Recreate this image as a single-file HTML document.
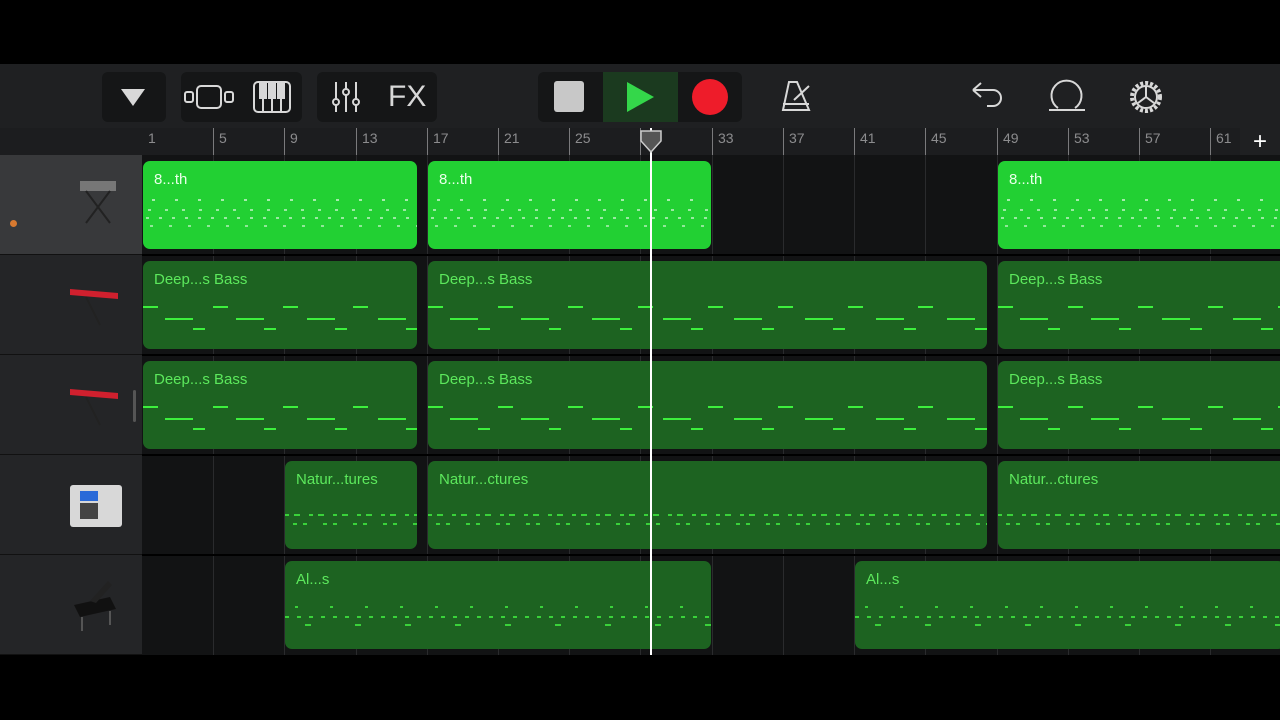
<!DOCTYPE html>
<html><head><meta charset="utf-8"><style>
*{margin:0;padding:0;box-sizing:border-box}
body{width:1280px;height:720px;background:#000;position:relative;overflow:hidden;font-family:"Liberation Sans",sans-serif}
.a{position:absolute}
#tb{left:0;top:64px;width:1280px;height:64px;background:#1f2022}
.btn{position:absolute;top:8px;height:50px;background:#151617;border-radius:6px}
#ruler{left:142px;top:128px;width:1138px;height:27px;background:#1c1d1f}
.tick{position:absolute;top:0;width:1px;height:27px;background:#7a7a7c}
.num{position:absolute;top:2px;font-size:14px;color:#8c8c8e}
.hdr{position:absolute;left:0;width:142px;height:100px;background:#242527;border-bottom:1px solid #111}
#area{left:142px;top:155px;width:1138px;height:500px;background:#121314}
.gl{position:absolute;top:0;width:1px;height:500px;background:#2a2b2d}
.rg{position:absolute;height:88px;border-radius:7px;background:#1d6321;overflow:hidden}
.rg span{position:absolute;left:11px;top:10px;font-size:15px;color:#5ce85c}
.b{background:#22d033}
.b span{color:#eaffea}
.n1{position:absolute;left:0;right:0;top:38px;height:30px;background:
repeating-linear-gradient(90deg,transparent 0 9px,rgba(255,255,255,.6) 9px 12px,transparent 12px 23px) 0 0/100% 2px no-repeat,
repeating-linear-gradient(90deg,transparent 0 5px,rgba(255,255,255,.55) 5px 8px,transparent 8px 17px) 0 10px/100% 2px no-repeat,
repeating-linear-gradient(90deg,transparent 0 3px,rgba(255,255,255,.55) 3px 6px,transparent 6px 13px) 0 18px/100% 2px no-repeat,
repeating-linear-gradient(90deg,transparent 0 7px,rgba(255,255,255,.5) 7px 10px,transparent 10px 19px) 0 26px/100% 2px no-repeat}
.n2{position:absolute;left:0;right:0;top:45px;height:25px;background:
repeating-linear-gradient(90deg,#3df03d 0 15px,transparent 15px 70px) 0 0/100% 2px no-repeat,
repeating-linear-gradient(90deg,transparent 0 22px,#3df03d 22px 50px,transparent 50px 71px) 0 12px/100% 2px no-repeat,
repeating-linear-gradient(90deg,transparent 0 50px,#3df03d 50px 62px,transparent 62px 71px) 0 22px/100% 2px no-repeat}
.n3{position:absolute;left:0;right:0;top:53px;height:12px;background:
repeating-linear-gradient(90deg,#3ad23a 0 4px,transparent 4px 9px,#3ad23a 9px 15px,transparent 15px 24px) 0 0/100% 2px no-repeat,
repeating-linear-gradient(90deg,transparent 0 8px,#3ad23a 8px 12px,transparent 12px 18px,#3ad23a 18px 22px,transparent 22px 30px) 0 9px/100% 2px no-repeat}
.n4{position:absolute;left:0;right:0;top:45px;height:25px;background:
repeating-linear-gradient(90deg,transparent 0 10px,#3ad23a 10px 13px,transparent 13px 35px) 0 0/100% 2px no-repeat,
repeating-linear-gradient(90deg,#3ad23a 0 4px,transparent 4px 12px) 0 10px/100% 2px no-repeat,
repeating-linear-gradient(90deg,transparent 0 20px,#3ad23a 20px 26px,transparent 26px 50px) 0 18px/100% 2px no-repeat}
</style></head><body>
<div id="tb" class="a">
 <div class="btn" style="left:102px;width:64px"></div>
 <svg class="a" style="left:120px;top:24px" width="26" height="20"><path d="M1 1h24L13 18z" fill="#d8d8d8"/></svg>
 <div class="btn" style="left:181px;width:121px"></div>
 <svg class="a" style="left:183px;top:20px" width="54" height="26" fill="none" stroke="#d8d8d8" stroke-width="2"><rect x="2" y="8" width="8" height="10" rx="2"/><rect x="14" y="2" width="24" height="22" rx="4"/><rect x="42" y="8" width="8" height="10" rx="2"/></svg>
 <svg class="a" style="left:252px;top:16px" width="40" height="34" fill="none" stroke="#d8d8d8" stroke-width="2"><rect x="2" y="2" width="36" height="30" rx="4"/><path d="M11 2v30M20 2v30M29 2v30"/><path d="M8 2h6v16h-6zM17 2h6v16h-6zM26 2h6v16h-6z" fill="#d8d8d8"/></svg>
 <div class="btn" style="left:317px;width:120px"></div>
 <svg class="a" style="left:330px;top:16px" width="32" height="34" fill="none" stroke="#d8d8d8" stroke-width="2"><path d="M6 2v30M16 2v30M26 2v30"/><circle cx="6" cy="22" r="3" fill="#151617"/><circle cx="16" cy="12" r="3" fill="#151617"/><circle cx="26" cy="22" r="3" fill="#151617"/></svg>
 <div class="a" style="left:388px;top:16px;font-size:30px;color:#d8d8d8">FX</div>
 <div class="btn" style="left:538px;width:204px"></div>
 <div class="a" style="left:603px;top:8px;width:75px;height:50px;background:#1b3a1f"></div>
 <div class="a" style="left:554px;top:17px;width:30px;height:31px;background:#c8c8c8;border-radius:3px"></div>
 <svg class="a" style="left:626px;top:17px" width="30" height="32"><path d="M1 1L28 16 1 31z" fill="#34d74a"/></svg>
 <div class="a" style="left:692px;top:15px;width:36px;height:36px;background:#ee1c2a;border-radius:50%"></div>
 <svg class="a" style="left:779px;top:14px" width="36" height="36" fill="none" stroke="#d8d8d8" stroke-width="2"><path d="M10 4h8l12 28H4z"/><path d="M4 26h26M15 22L30 8"/></svg>
 <svg class="a" style="left:970px;top:16px" width="36" height="32" fill="none" stroke="#d8d8d8" stroke-width="2"><path d="M3 10L11 3M3 10l8 7M3 10h20a8 8 0 010 16h-6"/></svg>
 <svg class="a" style="left:1047px;top:14px" width="42" height="36" fill="none" stroke="#d8d8d8" stroke-width="2"><path d="M11 30a15 15 0 1 1 17 0M2 32h36"/></svg>
 <svg class="a" style="left:1128px;top:15px" width="36" height="36" fill="none" stroke="#d8d8d8" stroke-width="2"><circle cx="18" cy="18" r="14" stroke-dasharray="3 2" stroke-width="4"/><circle cx="18" cy="18" r="11"/><path d="M18 18V8M18 18l-8 6M18 18l8 6"/></svg>
</div>
<div class="a" style="left:0;top:128px;width:142px;height:27px;background:#1c1d1f"></div>
<div id="ruler" class="a">
 <div class="num" style="left:6px">1</div>
 <div class="tick" style="left:71px"></div><div class="num" style="left:77px">5</div>
 <div class="tick" style="left:142px"></div><div class="num" style="left:148px">9</div>
 <div class="tick" style="left:214px"></div><div class="num" style="left:220px">13</div>
 <div class="tick" style="left:285px"></div><div class="num" style="left:291px">17</div>
 <div class="tick" style="left:356px"></div><div class="num" style="left:362px">21</div>
 <div class="tick" style="left:427px"></div><div class="num" style="left:433px">25</div>
 <div class="tick" style="left:498px"></div><div class="num" style="left:504px">29</div>
 <div class="tick" style="left:570px"></div><div class="num" style="left:576px">33</div>
 <div class="tick" style="left:641px"></div><div class="num" style="left:647px">37</div>
 <div class="tick" style="left:712px"></div><div class="num" style="left:718px">41</div>
 <div class="tick" style="left:783px"></div><div class="num" style="left:789px">45</div>
 <div class="tick" style="left:855px"></div><div class="num" style="left:861px">49</div>
 <div class="tick" style="left:926px"></div><div class="num" style="left:932px">53</div>
 <div class="tick" style="left:997px"></div><div class="num" style="left:1003px">57</div>
 <div class="tick" style="left:1068px"></div><div class="num" style="left:1074px">61</div>
 <div class="a" style="left:1098px;top:0;width:40px;height:27px;background:#1f2022;color:#fff;font-size:24px;text-align:center;line-height:28px">+</div>
</div>
<div class="hdr" style="top:155px;background:#38393b"><div class="a" style="left:10px;top:65px;width:7px;height:7px;border-radius:50%;background:#d87a30"></div>
 <svg class="a" style="left:76px;top:22px" width="44" height="50"><rect x="4" y="4" width="36" height="10" fill="#777"/><path d="M10 14L34 46M34 14L10 46" stroke="#222" stroke-width="2"/></svg></div>
<div class="hdr" style="top:255px"><svg class="a" style="left:68px;top:28px" width="54" height="46"><path d="M2 6L50 10 50 16 2 12z" fill="#d0202e"/><path d="M18 14L32 42" stroke="#222" stroke-width="2"/></svg></div>
<div class="hdr" style="top:355px"><svg class="a" style="left:68px;top:28px" width="54" height="46"><path d="M2 6L50 10 50 16 2 12z" fill="#d0202e"/><path d="M18 14L32 42" stroke="#222" stroke-width="2"/></svg><div class="a" style="left:133px;top:35px;width:3px;height:32px;background:#555;border-radius:2px"></div></div>
<div class="hdr" style="top:455px"><div class="a" style="left:70px;top:30px;width:52px;height:42px;background:#d8d8d8;border-radius:3px"><div class="a" style="left:10px;top:6px;width:18px;height:10px;background:#2a6ad8"></div><div class="a" style="left:10px;top:18px;width:18px;height:16px;background:#444"></div></div></div>
<div class="hdr" style="top:555px"><svg class="a" style="left:70px;top:20px" width="50" height="58"><path d="M4 30L40 22 46 34 10 42z" fill="#111"/><path d="M20 26L38 6 42 10 26 28" fill="#222"/><path d="M12 42v14M40 36v14" stroke="#555" stroke-width="2"/></svg></div>
<div id="area" class="a">
 <div class="gl" style="left:71px"></div><div class="gl" style="left:142px"></div><div class="gl" style="left:214px"></div><div class="gl" style="left:285px"></div><div class="gl" style="left:356px"></div><div class="gl" style="left:427px"></div><div class="gl" style="left:498px"></div><div class="gl" style="left:570px"></div><div class="gl" style="left:641px"></div><div class="gl" style="left:712px"></div><div class="gl" style="left:783px"></div><div class="gl" style="left:855px"></div><div class="gl" style="left:926px"></div><div class="gl" style="left:997px"></div><div class="gl" style="left:1068px"></div>
 <div class="a" style="left:0;top:99px;width:1138px;height:2px;background:#000"></div>
 <div class="a" style="left:0;top:199px;width:1138px;height:2px;background:#000"></div>
 <div class="a" style="left:0;top:299px;width:1138px;height:2px;background:#000"></div>
 <div class="a" style="left:0;top:399px;width:1138px;height:2px;background:#000"></div>

 <div class="rg b" style="left:1px;top:6px;width:274px"><span>8...th</span><div class="n1"></div></div>
 <div class="rg b" style="left:286px;top:6px;width:283px"><span>8...th</span><div class="n1"></div></div>
 <div class="rg b" style="left:856px;top:6px;width:290px"><span>8...th</span><div class="n1"></div></div>

 <div class="rg" style="left:1px;top:106px;width:274px"><span>Deep...s Bass</span><div class="n2"></div></div>
 <div class="rg" style="left:286px;top:106px;width:559px"><span>Deep...s Bass</span><div class="n2"></div></div>
 <div class="rg" style="left:856px;top:106px;width:290px"><span>Deep...s Bass</span><div class="n2"></div></div>

 <div class="rg" style="left:1px;top:206px;width:274px"><span>Deep...s Bass</span><div class="n2"></div></div>
 <div class="rg" style="left:286px;top:206px;width:559px"><span>Deep...s Bass</span><div class="n2"></div></div>
 <div class="rg" style="left:856px;top:206px;width:290px"><span>Deep...s Bass</span><div class="n2"></div></div>

 <div class="rg" style="left:143px;top:306px;width:132px"><span>Natur...tures</span><div class="n3"></div></div>
 <div class="rg" style="left:286px;top:306px;width:559px"><span>Natur...ctures</span><div class="n3"></div></div>
 <div class="rg" style="left:856px;top:306px;width:290px"><span>Natur...ctures</span><div class="n3"></div></div>

 <div class="rg" style="left:143px;top:406px;width:426px"><span>Al...s</span><div class="n4"></div></div>
 <div class="rg" style="left:713px;top:406px;width:430px"><span>Al...s</span><div class="n4"></div></div>
</div>
<div class="a" style="left:650px;top:128px;width:2px;height:527px;background:#fff"></div>
<svg class="a" style="left:639px;top:130px" width="25" height="24"><path d="M2 1h20v10l-10 11L2 11z" fill="#555" stroke="#ccc" stroke-width="1.5"/></svg>
</body></html>
